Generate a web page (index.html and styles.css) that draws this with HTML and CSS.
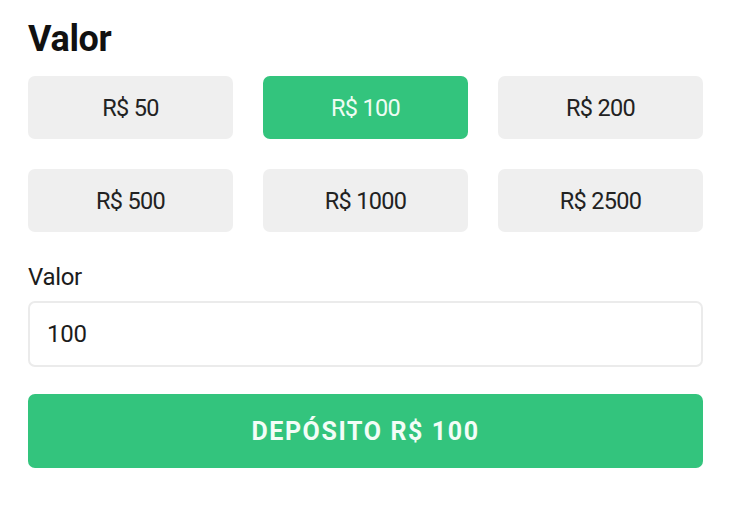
FILE: index.html
```html
<!DOCTYPE html>
<html lang="pt-BR">
<head>
<meta charset="utf-8">
<link rel="stylesheet" href="styles.css">
</head>
<body>
<div class="panel">
  <h2 class="title">Valor</h2>
  <div class="grid">
    <button class="amount">R$ 50</button>
    <button class="amount active">R$ 100</button>
    <button class="amount">R$ 200</button>
    <button class="amount">R$ 500</button>
    <button class="amount">R$ 1000</button>
    <button class="amount">R$ 2500</button>
  </div>
  <label class="label" for="valor">Valor</label>
  <input id="valor" class="input" type="text" value="100">
  <button class="submit">DEPÓSITO R$ 100</button>
</div>
</body>
</html>
```
FILE: styles.css
```css
html, body {
  margin: 0;
  padding: 0;
  background: #ffffff;
}
body {
  font-family: Roboto, "Liberation Sans", sans-serif;
  color: #1c1c1c;
}
.panel {
  width: 675px;
  padding: 18px 0 0 28px;
  display: flex;
  flex-direction: column;
}
.title {
  margin: 0;
  font-size: 36px;
  font-weight: 700;
  line-height: 42px;
  color: #111;
  letter-spacing: -0.3px;
}
.grid {
  margin-top: 16px;
  display: grid;
  grid-template-columns: repeat(3, 1fr);
  column-gap: 30px;
  row-gap: 30px;
}
.amount {
  height: 63px;
  border: none;
  border-radius: 7px;
  background: #efefef;
  font-family: Roboto, "Liberation Sans", sans-serif;
  font-size: 23.5px;
  color: #222;
  letter-spacing: -0.7px;
  padding: 0;
}
.amount.active {
  background: #33c47d;
  color: #eefcf3;
}
.label {
  margin-top: 30px;
  font-size: 24px;
  line-height: 30px;
  color: #1c1c1c;
  letter-spacing: -0.3px;
}
.input {
  margin-top: 9px;
  height: 66px;
  box-sizing: border-box;
  border: 2px solid #ebebeb;
  border-radius: 7px;
  padding: 0 17px;
  font-family: Roboto, "Liberation Sans", sans-serif;
  font-size: 24px;
  color: #1c1c1c;
  outline: none;
  letter-spacing: -0.3px;
}
.submit {
  margin-top: 27px;
  height: 74px;
  border: none;
  border-radius: 7px;
  background: #33c47d;
  color: #f3fdf7;
  font-family: Roboto, "Liberation Sans", sans-serif;
  font-size: 25px;
  font-weight: 700;
  letter-spacing: 1.6px;
}
```
